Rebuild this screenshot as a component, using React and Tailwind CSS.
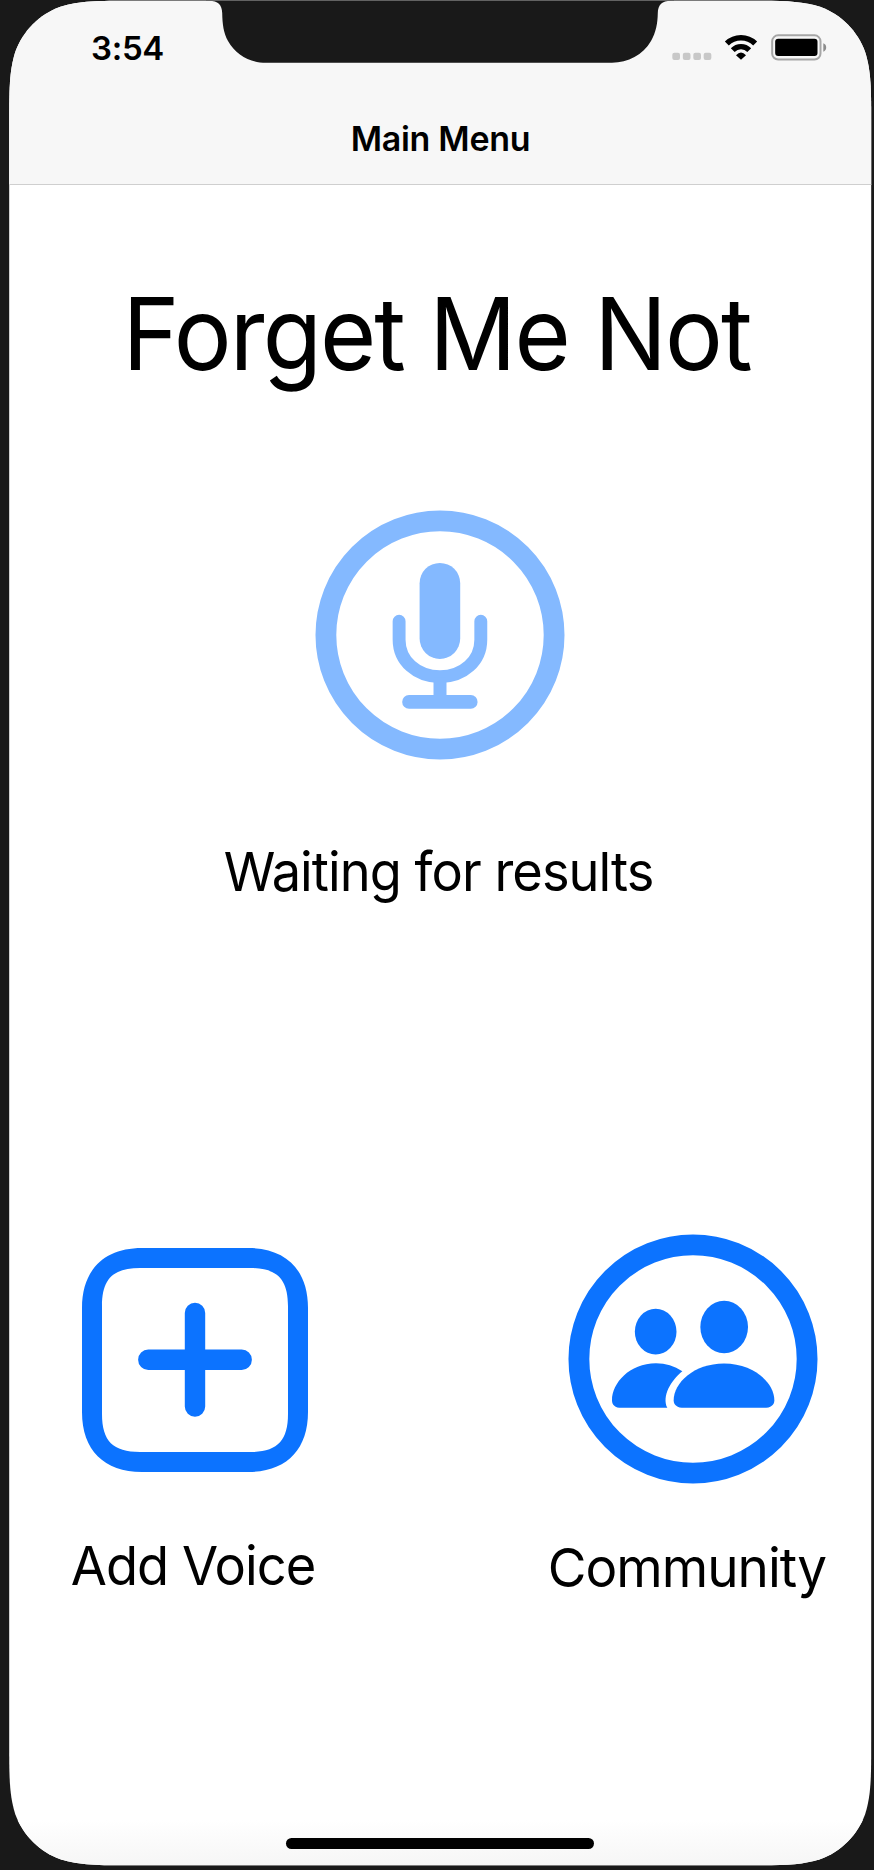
import React from "react";

// Continuous-curvature corner, as [x, y] multiples of the radius.
const CURVE = [
  [0, 1.5287], [0, 1.0885], [0, 0.8684], [0.0749, 0.6315], [0.1691, 0.3728],
  [0.3728, 0.1691], [0.6315, 0.0749], [0.8684, 0], [1.0885, 0], [1.5287, 0],
];

function screenOutline(x0, y0, x1, y1, r) {
  const corner = (fx, fy, reverse) => {
    const pts = CURVE.map(([a, b]) => `${(fx ? x1 - a * r : x0 + a * r).toFixed(2)} ${(fy ? y1 - b * r : y0 + b * r).toFixed(2)}`);
    if (reverse) pts.reverse();
    return `${pts[0]} C${pts.slice(1).join(" ")}`;
  };
  return `M${corner(false, false, false)} L${corner(true, false, true)} L${corner(true, true, false)} L${corner(false, true, true)} Z`;
}

const OUTLINE = screenOutline(9.2, 0.8, 871.2, 1865.3, 81);

function Notch() {
  return (
    <svg className="absolute left-[206px] top-0" width="468" height="64" viewBox="206 0 468 64">
      <path
        fill="#191919"
        d="M206 0V.8H209C218 .8 222 5 222.2 13C222.4 24 223.5 33 228 41C236 55 250 62.7 266 62.7H612C628 62.7 643 55 651 41C656 32 657.6 24 657.8 13C658 5 662 .8 671 .8H674V0Z"
      />
    </svg>
  );
}

function StatusIcons() {
  return (
    <svg width="160" height="30" viewBox="700 96 480 90">
      <g fill="#c8c8c8">
        <rect x="707" y="158" width="23" height="22" rx="6" />
        <rect x="738.500" y="158" width="23" height="22" rx="6" />
        <rect x="770" y="158" width="23" height="22" rx="6" />
        <rect x="801" y="158" width="23" height="22" rx="6" />
      </g>
      <g fill="none" stroke="#000">
        <path strokeWidth="17" d="M870.500 130.500A61 61 0 0 1 955.500 130.500" />
        <path strokeWidth="16" d="M888.200 150.500A34.500 34.500 0 0 1 937.800 150.500" />
      </g>
      <path d="M913 179.500L898 165.500Q913 149 928 165.500Z" />
      <rect x="1006.500" y="106" width="145" height="72.500" rx="18" fill="none" stroke="#a6a6a6" strokeWidth="6" />
      <rect x="1015.500" y="116" width="127" height="52" rx="9" />
      <path fill="#8c8c8c" d="M1160 130Q1168.500 133 1168.500 142.500Q1168.500 152 1160 155Z" />
    </svg>
  );
}

function MicIcon() {
  return (
    <svg width="250" height="250" viewBox="315.400 510.300 250 250" fill="none" stroke="#84b9ff">
      <circle cx="440.400" cy="635.300" r="114.100" strokeWidth="20.800" />
      <rect x="420" y="563.200" width="40.600" height="96" rx="20.300" fill="#84b9ff" stroke="none" />
      <path strokeWidth="12.900" strokeLinecap="round" d="M399.500 621.500V640C399.500 661 417 677 440.400 677S481.200 661 481.200 640V621.500" />
      <path strokeWidth="13" d="M440.400 678V700" />
      <path strokeWidth="13.600" strokeLinecap="round" d="M409.400 702.200H471.200" />
    </svg>
  );
}

function PlusIcon() {
  return (
    <svg width="226" height="224" viewBox="0 0 226 224" fill="#0c73ff">
      <path
        fillRule="evenodd"
        d="M0 60C0 22 22 0 60 0H166C204 0 226 22 226 60V164C226 202 204 224 166 224H60C22 224 0 202 0 164Z
           M20 58V166C20 193 31 204 58 204H168C195 204 206 193 206 166V58C206 31 195 20 168 20H58C31 20 20 31 20 58Z"
      />
      <path fill="none" stroke="#0c73ff" strokeWidth="20.400" strokeLinecap="round" d="M66.300 111.700H159.700M113 65V158.500" />
    </svg>
  );
}

function CommunityIcon() {
  return (
    <svg width="250" height="250" viewBox="115 42.500 750 750" fill="#0c73ff">
      <circle cx="490" cy="417.500" r="342.300" fill="none" stroke="#0c73ff" strokeWidth="62.500" />
      <ellipse cx="378" cy="335.500" rx="62.500" ry="68.500" />
      <ellipse cx="583.500" cy="321.500" rx="71.500" ry="78.500" />
      <path d="M276 564C256 564 247 555 247 541C247 490 299 430 379 430C408 430 434 438 458 454C424 481 396 529 413 564Z" />
      <path d="M464 564C442 564 432 555 432 541C432 490 492 431 583 431C674 431 734 490 734 541C734 555 724 564 702 564Z" />
    </svg>
  );
}

export default function App() {
  return (
    <div className="h-[1870px] w-[874px] overflow-hidden bg-[#191919] font-['Inter',sans-serif] text-black">
      <div className="relative flex h-full flex-col bg-white" style={{ clipPath: `path("${OUTLINE}")` }}>
        <header className="h-[185px] shrink-0 border-b border-[#cfcfcf] bg-[#f7f7f7]">
          <div className="flex h-24 items-center justify-between pl-[91px] pr-[44px]">
            <span className="text-[33px] font-semibold leading-none tracking-[-0.3px]">3:54</span>
            <div className="mt-[-2px]"><StatusIcons /></div>
          </div>
          <h1 className="pl-[7px] text-center text-[34px] font-semibold leading-[86px] tracking-[-0.3px]">Main Menu</h1>
        </header>
        <Notch />

        <main className="flex grow flex-col items-center pl-[9px] pr-[3px]">
          <h2 className="mt-[88px] scale-x-[0.956] whitespace-nowrap pr-[6px] text-[101px] leading-[120px] tracking-[-2px]">Forget Me Not</h2>
          <button className="mt-[117px]" aria-label="Listen"><MicIcon /></button>
          <p className="mt-[82px] scale-x-[0.97] whitespace-nowrap pr-[3px] text-[54px] leading-[60px] tracking-[-1px]">Waiting for results</p>
          <div className="mt-[332px] flex w-full items-start justify-between pl-[63px] pr-[28px]">
            <button className="flex w-[246px] flex-col items-center pt-[14px]">
              <PlusIcon />
              <span className="mt-[64px] scale-x-[0.971] whitespace-nowrap pr-[4px] text-[54px] leading-[60px] tracking-[-1px]">Add Voice</span>
            </button>
            <button className="flex w-[300px] flex-col items-center">
              <CommunityIcon />
              <span className="mt-[54px] scale-x-[0.982] whitespace-nowrap pr-[12px] text-[54px] leading-[60px] tracking-[-1px]">Community</span>
            </button>
          </div>
        </main>

        <footer className="flex h-[50px] shrink-0 items-start justify-center bg-linear-to-b from-white to-[#f5f5f5] pl-[6px] pt-[18px]">
          <div className="h-[10.500px] w-[308px] rounded-full bg-black" />
        </footer>
      </div>
    </div>
  );
}
